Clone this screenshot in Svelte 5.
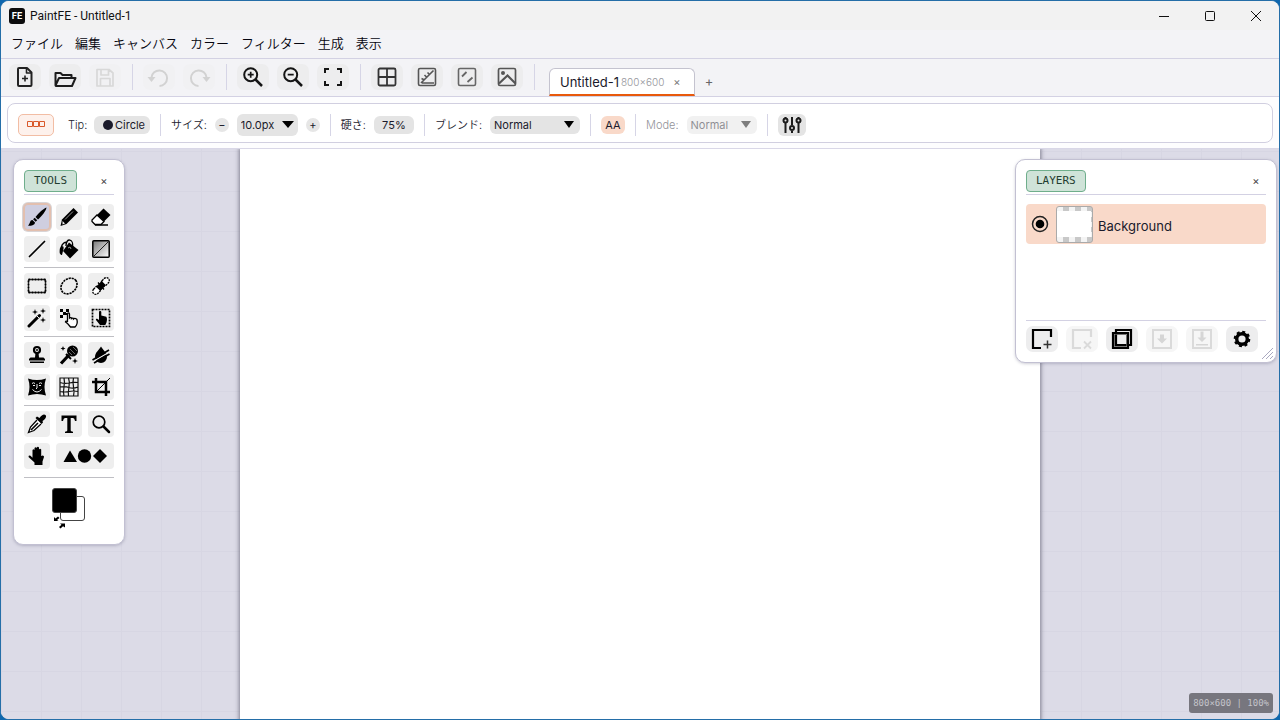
<script>
  // Menu and tab labels
  const menus = ['ファイル', '編集', 'キャンバス', 'カラー', 'フィルター', '生成', '表示'];

  // Toolbar groups, drawn with a separator after each
  const toolbar = [
    [
      { id: 'new', label: 'New' },
      { id: 'open', label: 'Open' },
      { id: 'save', label: 'Save', disabled: true }
    ],
    [
      { id: 'undo', label: 'Undo', disabled: true },
      { id: 'redo', label: 'Redo', disabled: true }
    ],
    [
      { id: 'zoomIn', label: 'Zoom in' },
      { id: 'zoomOut', label: 'Zoom out' },
      { id: 'fit', label: 'Fit to window' }
    ],
    [
      { id: 'grid', label: 'Pixel grid' },
      { id: 'ruler', label: 'Rulers' },
      { id: 'guides', label: 'Guides' },
      { id: 'image', label: 'Preview' }
    ]
  ];

  const toolGroups = [
    ['brush', 'pencil', 'eraser', 'line', 'bucket', 'gradient'],
    ['rectSelect', 'ellipseSelect', 'lasso', 'wand', 'movePixels', 'moveSelection'],
    ['stamp', 'heal', 'smudge', 'liquify', 'mesh', 'crop'],
    ['dropper', 'text', 'zoom', 'pan', 'shapes']
  ];

  const layerActions = [
    { id: 'layerAdd', label: 'Add layer' },
    { id: 'layerDelete', label: 'Delete layer', disabled: true },
    { id: 'layerCopy', label: 'Duplicate layer' },
    { id: 'mergeDown', label: 'Merge down', disabled: true },
    { id: 'flatten', label: 'Flatten', disabled: true },
    { id: 'gear', label: 'Layer settings' }
  ];

  // 24x24 icons
  const icons = {
    new: '<g fill="none" stroke="#222" stroke-width="2" stroke-linejoin="round"><path d="M6 3h8l4.500 4.500v12.500a1 1 0 0 1-1 1H6a1 1 0 0 1-1-1V4a1 1 0 0 1 1-1z"/><path d="M13.500 3v5H18M12 10.500v6M9 13.500h6" stroke-width="1.600"/></g>',
    open: '<path d="M2.500 20V8h5l2 2h9v3M2.500 20.500L6 13h16.500l-3.500 8H3z" fill="none" stroke="#1c1c1c" stroke-width="2" stroke-linejoin="round"/>',
    save: '<path d="M4 4.500h12l4 3.500v13H4zM8 5v5h7.500V5M7.500 21v-7.500h9.500V21" fill="none" stroke="#d8d8d8" stroke-width="1.700" stroke-linejoin="round"/>',
    undo: '<path d="M4.500 12.500a7.800 7.800 0 1 1 8 8.500" fill="none" stroke="#d2d2d2" stroke-width="2"/><path d="M.5 12h8l-4 5z" fill="#d2d2d2"/>',
    redo: '<path d="M19.500 12.500a7.800 7.800 0 1 0-8 8.500" fill="none" stroke="#d2d2d2" stroke-width="2"/><path d="M23.500 12h-8l4 5z" fill="#d2d2d2"/>',
    zoomIn: '<g fill="none" stroke="#151515" stroke-width="2"><circle cx="9.700" cy="9.700" r="6.500"/><path d="M14.500 14.500L21 21" stroke-width="2.500"/><path d="M9.700 6.700v6M6.700 9.700h6" stroke-width="1.700"/></g>',
    zoomOut: '<g fill="none" stroke="#151515" stroke-width="2"><circle cx="9.700" cy="9.700" r="6.500"/><path d="M14.500 14.500L21 21" stroke-width="2.500"/><path d="M6.700 9.700h6" stroke-width="1.700"/></g>',
    fit: '<path d="M4 8V4h4M16 4h4v4M20 16v4h-4M8 20H4v-4" fill="none" stroke="#151515" stroke-width="2"/>',
    grid: '<g fill="none" stroke="#333" stroke-width="1.800"><rect x="3.500" y="3.500" width="17" height="17" rx="1.500"/><path d="M12 3.500v17M3.500 12h17"/></g>',
    ruler: '<g fill="none" stroke="#555" stroke-width="1.600"><rect x="3.500" y="3.500" width="17" height="17" rx="1.500"/><path d="M6 18L18.500 5.500M6.500 13.500l3 1.500M9.500 10l2.500 2.500M12.500 7.500l2.500 2.500M7 18h12"/></g>',
    guides: '<g fill="none" stroke="#666" stroke-width="1.600"><rect x="3.500" y="3.500" width="17" height="17" rx="1.500"/><path d="M7 11.500L11.500 7M12.500 17l5-4.500" stroke-width="1.800"/></g>',
    image: '<g fill="none" stroke="#555" stroke-width="1.700"><rect x="3.500" y="3.500" width="17" height="17" rx="1.500"/><path d="M4 18.500l8.500-8 8 8" stroke-width="2.200"/></g><circle cx="8" cy="8" r="2" fill="#555"/>',
    layerAdd: '<path d="M11 21H3V3h18v7" fill="none" stroke="#000" stroke-width="2.200"/><path d="M17.500 13.500v8M13.500 17.500h8" stroke="#333" stroke-width="1.500"/>',
    layerDelete: '<path d="M11 21H3V3h18v7" fill="none" stroke="#dadada" stroke-width="2.200"/><path d="M14 14.500l7 7M21 14.500l-7 7" stroke="#dadada" stroke-width="1.800"/>',
    layerCopy: '<path d="M3 6h15v15H3zM6 3h15v15H6z" fill="none" stroke="#000" stroke-width="2.200"/><path d="M4.500 7.500h12v12h-12z" fill="none" stroke="#555" stroke-width=".8"/>',
    mergeDown: '<rect x="3" y="3" width="18" height="18" fill="none" stroke="#dadada" stroke-width="2"/><path d="M10 7.500h4v4h3l-5 5-5-5h3z" fill="#d6d6d6"/>',
    flatten: '<rect x="3" y="3" width="18" height="18" fill="none" stroke="#dadada" stroke-width="2"/><path d="M10.500 4.500h3v6h3L12 15l-4.500-4.500h3zM6 17h12v1.500H6z" fill="#d6d6d6"/>',
    gear: '<circle cx="12" cy="12" r="5.300" fill="none" stroke="#000" stroke-width="3.400"/><circle cx="12" cy="12" r="7.300" fill="none" stroke="#000" stroke-width="2" stroke-dasharray="3 2.733"/>'
  };

  // 20x20 tool icons
  const toolIcons = {
    brush: { label: 'Brush', svg: '<path d="M19.500.5c-3 1-8.500 6-11 9.500l2.500 2.500c3.500-3 8-8.500 8.500-12z"/><path d="M7.700 10.800l2.500 2.500-1.500 1.500-2.600-2.600z"/><path d="M5.500 13c-3 0-2 3.500-4.500 5.500 3 .8 7-.5 7-3z"/>' },
    pencil: { label: 'Pencil', svg: '<path d="M14.500 1l4.500 4.500L7.500 17l-6 2L3 12.500z"/><path d="M6 12.500L14 4.500" stroke="#bbb" stroke-width=".8"/><path d="M3.500 14l2.500 2.500-2.500 1z" fill="#eee"/>' },
    eraser: { label: 'Eraser', svg: '<path d="M12.500 1.500L19.500 8 13 14.500 6 8z"/><path d="M6 8l7 6.500-3 3H4L1 14.500V13z" fill="#fff" stroke="#000" stroke-width="1.300"/><path d="M4 18h13" stroke="#000" stroke-width="1.300"/>' },
    line: { label: 'Line', svg: '<path d="M2.500 17.500l15-15" stroke="#000" stroke-width="1.700" stroke-linecap="round"/>' },
    bucket: { label: 'Fill', svg: '<path d="M10 3.500l9.500 7.500-8.500 8.500L4 12z"/><path d="M2 12C1.500 7 4 3 8 3M7 7c0-9 8-7 6.500 1" fill="none" stroke="#000" stroke-width="1.400"/><path d="M1 9c3-3 4-2 3.500 1L3 16c-2 0-3-2-2-7z"/><path d="M9 9l2-1 1 2" fill="none" stroke="#999"/>' },
    gradient: { label: 'Gradient', svg: '<defs><linearGradient id="fade" x1="0" y1="0" x2="1" y2="1"><stop offset="0" stop-color="#777"/><stop offset="1" stop-color="#fff"/></linearGradient></defs><rect x="1.800" y="1.800" width="16.400" height="16.400" rx="1" fill="url(#fade)" stroke="#000" stroke-width="1.500"/><path d="M2.500 17.500l15-15" stroke="#222"/>' },
    rectSelect: { label: 'Rectangle select', svg: '<rect x="1.500" y="3.500" width="17" height="13" fill="none" stroke="#444"/><rect x="1.500" y="3.500" width="17" height="13" fill="none" stroke="#000" stroke-width="1.800" stroke-dasharray="2 1"/>' },
    ellipseSelect: { label: 'Ellipse select', svg: '<ellipse cx="10" cy="10" rx="8.800" ry="7" transform="rotate(-42 10 10)" fill="none" stroke="#000" stroke-width="1.600" stroke-dasharray="2.200 .8"/>' },
    lasso: { label: 'Lasso', svg: '<g transform="rotate(-45 10 10)"><rect x="-.5" y="7" width="9" height="6" rx="3" fill="#fff" stroke="#000" stroke-width="1.300" stroke-dasharray="2 .8"/><rect x="11.500" y="7" width="9" height="6" rx="3" fill="#fff" stroke="#000" stroke-width="1.300" stroke-dasharray="2 .8"/><path d="M6 7h8v6H6z"/></g><path d="M7 6.500l6 7M6.500 10l3.500 4M10 6l3.500 4" stroke="#000" stroke-width="1.300"/>' },
    wand: { label: 'Magic wand', svg: '<path d="M2 18L12.500 7.500" stroke="#000" stroke-width="3" stroke-linecap="round"/><path d="M10 8l2 2" stroke="#eee"/><path d="M8 1l.7 2.300L11 4l-2.300.7L8 7l-.7-2.300L5 4l2.300-.7zM16 0l.7 2.300L19 3l-2.300.7L16 6l-.7-2.300L13 3l2.300-.7zM16 9l.7 2.300L19 12l-2.300.7L16 15l-.7-2.300L13 12l2.300-.7z"/>' },
    movePixels: { label: 'Move pixels', svg: '<path d="M1 1h3v3H1zM7 1h3v3H7zM4 4h3v3H4zM1 7h3v3H1zM7 5h3v2H7z"/><path d="M8.500 14V6c0-1.500 2-1.500 2 0v4c1-1 2 0 2 .5 1-1 2 0 2 .5 1-1 3.500-.5 3.500 1 .5 2 0 5-2 7h-4.500c-1.500-2-3-4-5-5 0-1.500 1.500-1 2 0z" fill="#fff" stroke="#000" stroke-width="1.300"/>' },
    moveSelection: { label: 'Move selection', svg: '<rect x="1.500" y="1.500" width="17" height="17" fill="none" stroke="#000" stroke-width="1.700" stroke-dasharray="2 1"/><path d="M8 10V4c0-1.300 2.300-1.300 2.300 0V7.500l5 1.200c1 1 .8 4.300 0 6.300l-1 2H9L5 12c-.5-1 .8-1.500 1.500-1L8 12z"/>' },
    stamp: { label: 'Clone stamp', svg: '<circle cx="10" cy="5" r="3" fill="none" stroke="#000" stroke-width="2.200"/><circle cx="10" cy="5" r="1"/><path d="M8.500 7.500h3l.5 5h4.500l1.500 1.500v1.500H2V14l1.500-1.500H8zM3 16.500h14V18H3z"/>' },
    heal: { label: 'Healing brush', svg: '<circle cx="13.500" cy="6" r="5.500"/><path d="M11 4l5 5M10 7l3 3M14 2l4 4" stroke="#aaa" stroke-width=".6"/><path d="M2 18.500L10 10" stroke="#000" stroke-width="3.200"/><path d="M7 9l5 5" stroke="#000" stroke-width="2"/><path d="M4 1l.7 1.800 1.800.7-1.800.7L4 6l-.7-1.800-1.800-.7 1.800-.7zM16 13l.8 2.200L19 16l-2.200.8L16 19l-.8-2.200L13 16l2.200-.8z"/>' },
    smudge: { label: 'Smudge', svg: '<path d="M10 1.500c2 3.500 6 6 6 10.500a6 6 0 0 1-12 0c0-4.500 4-7 6-10.500z"/><path d="M2 16.500L18.500 7" stroke="#eee" stroke-width="1.200"/><path d="M1.500 15L18 5M3 18L18.500 9" stroke="#000" stroke-width="1.700"/>' },
    liquify: { label: 'Liquify', svg: '<path d="M1 1.500q9 3 18 0-3 8.500 0 17-9-3-18 0 3-8.500 0-17z"/><path d="M5 6.500q1.500-1.500 3 0M12 6.500q1.500-1.500 3 0M6 8.500h2M12 8.500h2M10 7v4l-1 1M5.500 12.500q4.500 5 9 0" fill="none" stroke="#eee" stroke-width="1"/>' },
    mesh: { label: 'Mesh warp', svg: '<path d="M1 1h18v18H1zM5 1q1 4 0 9t0 9M9.500 1q1.500 4 .5 9t-.5 9M14.500 1q-1 4 0 9t0 9M1 5.500q5 1.500 9 .5t9-.5M1 10q5-1 9 .5t9-.5M1 14.500q5 1 9 0t9 0" fill="none" stroke="#111" stroke-width="1.200"/>' },
    crop: { label: 'Crop', svg: '<path d="M5 1v14h14M1 5h14v14" fill="none" stroke="#000" stroke-width="2.500"/><path d="M5 15L19 1" stroke="#000"/>' },
    dropper: { label: 'Color picker', svg: '<path d="M12.500 4c2-3 4.500-4.500 6-3s0 4-3 6l.5 1.500-1.500 1.500-6-6L10 2.500z"/><path d="M10 6l-6.500 7L1.500 18.500 7 16.500 14 10" fill="#fff" stroke="#000" stroke-width="1.300"/><path d="M4 16l7-7" stroke="#000" stroke-width="1.600"/>' },
    text: { label: 'Text', svg: '<path d="M2.500 1.500h15V7H16q-.5-3-2-3h-2.300v12.500q0 1 2.300 1.200V19H6v-1.300q2.300-.2 2.300-1.200V4H6Q4.500 4 4 7H2.500z"/>' },
    zoom: { label: 'Zoom', svg: '<circle cx="8" cy="8" r="5.800" fill="none" stroke="#000" stroke-width="1.700"/><path d="M12.500 12.500l5.500 5.500" stroke="#000" stroke-width="2.500" stroke-linecap="round"/>' },
    pan: { label: 'Pan', svg: '<path d="M5.500 10V4q1-1.500 2 0V9V2q1-1.500 2.200 0v6.500V1.500q1.200-1.500 2.300 0V9V3.500q1-1.500 2.200 0V10l1.500-.5q1.500 0 1.300 1.500L15.500 15.500V19H7.500v-2.500L1.500 11q0-2 2-1.300l2 2z"/>' },
    shapes: { label: 'Shapes', wide: true, svg: '<path d="M1.500 16L8 4.500 15 16z"/><circle cx="22.500" cy="10" r="6.700"/><path d="M38 3L45 10l-7 7-7-7z"/>' }
  };

  let activeTool = 'brush';
  let tip = 'Circle';
  let size = '10.0px';
  let hardness = '75%';
  let blend = 'Normal';
  let mode = 'Normal';
</script>

<div class="app">
  <header class="titlebar">
    <svg class="logo" width="16" height="16" viewBox="0 0 16 16">
      <rect width="16" height="16" rx="3" fill="#0c0c0c" />
      <text x="8" y="11" text-anchor="middle">FE</text>
    </svg>
    <span class="title">PaintFE - Untitled-1</span>
    <button class="win" aria-label="Minimize"><svg width="12" height="12"><path d="M1 6.500h10" /></svg></button>
    <button class="win" aria-label="Maximize"><svg width="12" height="12"><rect x="1.500" y="1.500" width="9" height="9" rx="1" /></svg></button>
    <button class="win" aria-label="Close"><svg width="12" height="12"><path d="M1 1l10 10M11 1L1 11" /></svg></button>
  </header>

  <nav class="menubar">
    {#each menus as menu}
      <button>{menu}</button>
    {/each}
  </nav>

  <div class="toolbar">
    {#each toolbar as group}
      {#each group as item}
        <button class="icon-btn" disabled={item.disabled} aria-label={item.label}>
          <svg width="24" height="24" viewBox="0 0 24 24">{@html icons[item.id]}</svg>
        </button>
      {/each}
      <span class="sep"></span>
    {/each}
    <div class="tab">
      <span class="tab-name">Untitled-1</span>
      <span class="tab-size">800×600</span>
      <button aria-label="Close tab">×</button>
    </div>
    <button class="tab-add" aria-label="New tab">+</button>
  </div>

  <div class="options-wrap">
    <div class="options">
      <button class="preset" aria-label="Brush presets">
        <svg width="18" height="7" viewBox="0 0 18 7">
          <path d="M.5.5h5v5h-5zM6.500.5h5v5h-5zM12.500.5h5v5h-5z" fill="none" stroke="#d9592b" />
        </svg>
      </button>
      <span class="label tip-label">Tip:</span>
      <button class="pill tip"><i></i>{tip}</button>
      <span class="sep"></span>
      <label class="label" for="size">サイズ:</label>
      <button class="step" aria-label="Smaller">−</button>
      <span class="select size">
        <select id="size" bind:value={size}><option>10.0px</option></select>
        <svg width="12" height="7" viewBox="0 0 12 7"><path d="M0 0h12L6 7z" /></svg>
      </span>
      <button class="step" aria-label="Larger">+</button>
      <span class="sep"></span>
      <label class="label" for="hardness">硬さ:</label>
      <input id="hardness" class="pill hardness" bind:value={hardness} />
      <span class="sep"></span>
      <label class="label" for="blend">ブレンド:</label>
      <span class="select blend">
        <select id="blend" bind:value={blend}><option>Normal</option></select>
        <svg width="10" height="7" viewBox="0 0 10 7"><path d="M0 0h10L5 7z" /></svg>
      </span>
      <span class="sep"></span>
      <button class="pill aa">AA</button>
      <span class="sep"></span>
      <label class="label dim" for="mode">Mode:</label>
      <span class="select mode dim">
        <select id="mode" bind:value={mode} disabled><option>Normal</option></select>
        <svg width="10" height="7" viewBox="0 0 10 7"><path d="M0 0h10L5 7z" /></svg>
      </span>
      <span class="sep"></span>
      <button class="sliders" aria-label="Brush dynamics">
        <svg width="20" height="18" viewBox="0 0 20 18" fill="none" stroke="#1c1c1c" stroke-width="2">
          <path d="M3.500 7v10M10 1v8M10 15v2M16.500 7v10M3.500 1v1M16.500 1v1" />
          <circle cx="3.500" cy="4.500" r="2" /><circle cx="10" cy="12" r="2" /><circle cx="16.500" cy="4.500" r="2" />
        </svg>
      </button>
    </div>
  </div>

  <main class="workspace">
    <div class="sheet"></div>

    <section class="panel tools">
      <div class="panel-head">
        <h2>TOOLS</h2>
        <button aria-label="Close tools">×</button>
      </div>
      {#each toolGroups as group}
        <div class="tool-group">
          {#each group as id}
            <button
              class="tool"
              class:active={activeTool === id}
              class:wide={toolIcons[id].wide}
              aria-label={toolIcons[id].label}
              on:click={() => (activeTool = id)}
            >
              <svg width={toolIcons[id].wide ? 46 : 20} height="20">{@html toolIcons[id].svg}</svg>
            </button>
          {/each}
        </div>
      {/each}
      <div class="colors">
        <button class="swatch secondary" aria-label="Secondary color"></button>
        <button class="swatch primary" aria-label="Primary color"></button>
        <button class="swap" aria-label="Swap colors">
          <svg width="14" height="14" viewBox="0 0 14 14">
            <path d="M2 2v4h4.500L5 5l2.500-2L6 1.500 3.500 3.500zM13 8.500H8l1.500 1.300L7 12l1.500 1.500L11 11.300l2 1.200z" />
          </svg>
        </button>
      </div>
    </section>

    <section class="panel layers">
      <div class="panel-head">
        <h2>LAYERS</h2>
        <button aria-label="Close layers">×</button>
      </div>
      <div class="layer-list">
        <div class="layer">
          <button class="eye" aria-label="Toggle visibility">
            <svg width="18" height="18" viewBox="0 0 18 18">
              <circle cx="9" cy="9" r="7.500" fill="none" stroke="#222" stroke-width="1.500" />
              <circle cx="9" cy="9" r="4.300" />
            </svg>
          </button>
          <span class="thumb"><i></i></span>
          <span class="layer-name">Background</span>
        </div>
      </div>
      <div class="layer-actions">
        {#each layerActions as action}
          <button class="icon-btn" disabled={action.disabled} aria-label={action.label}>
            <svg width="24" height="24" viewBox="0 0 24 24">{@html icons[action.id]}</svg>
          </button>
        {/each}
      </div>
      <svg class="grip" width="12" height="12" viewBox="0 0 12 12">
        <path d="M0 11L11 0M4 11l7-7M8 11l3-3" fill="none" stroke="#aaa9c0" />
      </svg>
    </section>

    <div class="status">800×600 | 100%</div>
  </main>
</div>

<style>
  :global(body) {
    background: #0f67ae;
  }

  .app {
    display: flex;
    flex-direction: column;
    box-sizing: border-box;
    height: 100vh;
    border: 1px solid #246ea8;
    border-radius: 9px;
    overflow: hidden;
    background: #f3f3f6;
    color: #1a1a2b;
    font-family: Inter, 'Noto Sans CJK JP', sans-serif;
    font-size: 11px;
  }

  button, input, select {
    margin: 0;
    padding: 0;
    border: none;
    background: none;
    color: inherit;
    font: inherit;
  }

  svg {
    display: block;
    flex: none;
  }

  .titlebar {
    display: flex;
    align-items: center;
    flex: none;
    height: 29px;
    padding-left: 8px;
    background: #f2f2f2;
  }

  .logo text {
    fill: #fff;
    font: bold 9px Inter, sans-serif;
  }

  .title {
    flex: 1;
    margin-left: 5px;
    color: #111;
    font-family: Roboto, sans-serif;
    font-size: 12px;
  }

  .win {
    display: grid;
    place-items: center;
    width: 46px;
    height: 29px;
  }

  .win svg {
    fill: none;
    stroke: #111;
  }

  .menubar {
    display: flex;
    align-items: center;
    flex: none;
    gap: 12px;
    box-sizing: border-box;
    height: 29px;
    padding: 0 0 2px 10px;
    border-bottom: 1px solid #d3d1e3;
    color: #05050f;
    font-size: 13px;
    font-weight: 350;
    line-height: 20px;
  }

  .menubar button {
    white-space: nowrap;
  }

  .toolbar {
    display: flex;
    align-items: center;
    flex: none;
    gap: 8px;
    height: 36px;
    padding: 0 0 1px 8px;
    border-bottom: 1px solid #d3d1e3;
  }

  .icon-btn {
    display: grid;
    place-items: center;
    width: 32px;
    height: 26px;
    border-radius: 7px;
    background: #ededee;
  }

  .icon-btn:disabled {
    background: #f1f1f3;
  }

  .sep {
    flex: none;
    width: 1px;
    height: 26px;
    margin: 0 2px 0 3px;
    background: #d6d5e6;
  }

  .tab {
    display: flex;
    align-items: center;
    align-self: flex-end;
    box-sizing: border-box;
    width: 146px;
    height: 28px;
    margin: 0 0 -1px 4px;
    padding: 0 10px;
    border: 1px solid #c4c3cf;
    border-bottom: 2px solid #e8590c;
    border-radius: 6px 6px 0 0;
    background: #fff;
  }

  .tab-name {
    font-size: 13px;
  }

  .tab-size {
    flex: 1;
    margin-left: 2px;
    color: #96969c;
    font-size: 10px;
    font-weight: 300;
  }

  .tab button {
    width: 14px;
    color: #777;
  }

  .tab-add {
    width: 12px;
    color: #666;
    font-size: 13px;
    line-height: 14px;
    padding-top: 8px;
  }

  .options-wrap {
    flex: none;
    padding: 6px;
    padding-bottom: 5px;
    border-bottom: 1px solid #d9d7e7;
    background: #fdfdfe;
  }

  .options {
    display: flex;
    align-items: center;
    gap: 8px;
    box-sizing: border-box;
    height: 40px;
    padding: 3px 10px 0;
    border: 1px solid #d1cfe0;
    border-radius: 8px;
    background: #fff;
  }

  .options .sep {
    height: 22px;
    margin: 0 2px;
  }

  .preset {
    display: grid;
    place-items: center;
    width: 36px;
    height: 22px;
    border: 1px solid #f2bda4;
    border-radius: 5px;
    background: #fdf1ec;
  }

  .label {
    color: #22222e;
    font-weight: 350;
    line-height: 18px;
    white-space: nowrap;
  }

  .tip-label {
    width: 18px;
    margin-left: 6px;
  }

  .pill {
    height: 18px;
    border-radius: 6px;
    background: #e4e4e4;
    line-height: 18px;
    text-align: center;
  }

  .tip {
    display: flex;
    align-items: center;
    gap: 2px;
    box-sizing: border-box;
    width: 56px;
    padding-left: 9px;
  }

  .tip i {
    width: 10px;
    height: 10px;
    border-radius: 50%;
    background: #1a1a2b;
  }

  .step {
    width: 14px;
    height: 14px;
    border-radius: 7px;
    background: #e6e6e6;
    line-height: 14px;
  }

  .select {
    display: flex;
    align-items: center;
    box-sizing: border-box;
    height: 18px;
    padding: 0 6px 0 4px;
    border-radius: 6px;
    background: #e4e4e4;
  }

  .select select {
    flex: 1;
    min-width: 0;
    appearance: none;
    opacity: 1;
  }

  .size {
    width: 61px;
    height: 22px;
    padding: 0 4px;
  }

  .blend {
    width: 90px;
  }

  .mode {
    width: 70px;
  }

  .hardness {
    width: 40px;
  }

  .aa {
    width: 24px;
    background: #f9d9c9;
  }

  .dim {
    opacity: 0.5;
  }

  .sliders {
    display: grid;
    place-items: center;
    width: 28px;
    height: 22px;
    border-radius: 6px;
    background: #e4e4e4;
  }

  .workspace {
    position: relative;
    display: flex;
    justify-content: center;
    flex: 1;
    min-height: 0;
    overflow: hidden;
    background-color: #dcdbe7;
    background-image:
      linear-gradient(#d7d6e3 1px, transparent 1px),
      linear-gradient(90deg, #d7d6e3 1px, transparent 1px);
    background-size: 40px 40px;
    background-position: 0 2px;
  }

  .sheet {
    flex: none;
    width: 800px;
    height: 600px;
    background: #fff;
    box-shadow: 0 0 4px 1px rgba(40, 40, 60, 0.5);
  }

  .panel {
    position: absolute;
    top: 10px;
    box-sizing: border-box;
    padding: 10px;
    border: 1px solid #c2c0d2;
    border-radius: 10px;
    background: #fff;
    box-shadow: 0 1px 3px rgba(60, 60, 90, 0.25);
  }

  .tools {
    left: 12px;
    width: 112px;
  }

  .layers {
    right: 2px;
    width: 262px;
  }

  .panel-head {
    display: flex;
    align-items: center;
    justify-content: space-between;
    padding-bottom: 2px;
    border-bottom: 1px solid #d3d1e3;
  }

  .panel-head h2 {
    margin: 0;
    padding: 0 9px;
    border: 1px solid #6fae8c;
    border-radius: 4px;
    background: #cfe3d8;
    color: #1f3d30;
    font: 11px/20px 'DejaVu Sans Mono', monospace;
  }

  .panel-head button {
    width: 20px;
    color: #444;
  }

  .tool-group {
    display: flex;
    flex-wrap: wrap;
    gap: 6px;
    padding: 5px 0;
    border-bottom: 1px solid #bfbfc4;
  }

  .panel-head + .tool-group {
    padding-top: 9px;
  }

  .tool-group:nth-last-child(2) {
    padding-bottom: 8px;
  }

  .tool {
    display: grid;
    place-items: center;
    width: 26px;
    height: 26px;
    border-radius: 4px;
    background: #eee;
  }

  .tool.wide {
    width: 58px;
  }

  .tool.active {
    background: #cfcee0;
    box-shadow: 0 0 0 1px #e3bfae, inset 0 0 0 1px #e3bfae, 0 0 0 2px #d8d4d6;
  }

  .colors {
    position: relative;
    height: 56px;
  }

  .swatch {
    position: absolute;
    box-sizing: border-box;
    width: 25px;
    height: 25px;
    border: 1px solid #444;
    border-radius: 3px;
  }

  .primary {
    top: 10px;
    left: 28px;
    background: #000;
  }

  .secondary {
    top: 18px;
    left: 36px;
    background: #fff;
  }

  .swap {
    position: absolute;
    top: 37px;
    left: 28px;
  }

  .layer-list {
    height: 116px;
    padding-top: 9px;
    border-bottom: 1px solid #d3d1e3;
  }

  .layer {
    display: flex;
    align-items: center;
    height: 40px;
    padding-left: 5px;
    border-radius: 4px;
    background: #f9d9c9;
  }

  .thumb {
    display: flex;
    align-items: center;
    box-sizing: border-box;
    width: 37px;
    height: 37px;
    margin: 0 5px 0 7px;
    border: 1px solid #aaa;
    border-radius: 3px;
    background: repeating-conic-gradient(#c8c8c8 0 25%, #f4f4f4 0 50%) 0 0 / 12px 10px;
  }

  .thumb i {
    width: 34px;
    height: 26px;
    background: #fff;
  }

  .layer-name {
    padding-top: 4px;
    font-size: 13px;
  }

  .layer-actions {
    display: flex;
    gap: 8px;
    padding-top: 5px;
  }

  .layer-actions .icon-btn:disabled {
    background: #f6f6f6;
  }

  .grip {
    position: absolute;
    right: 2px;
    bottom: 2px;
  }

  .status {
    position: absolute;
    right: 6px;
    bottom: 6px;
    padding: 0 4px;
    border-radius: 3px;
    background: #77767e;
    color: #c4c4ca;
    font: 9px/20px 'DejaVu Sans Mono', monospace;
  }
</style>
